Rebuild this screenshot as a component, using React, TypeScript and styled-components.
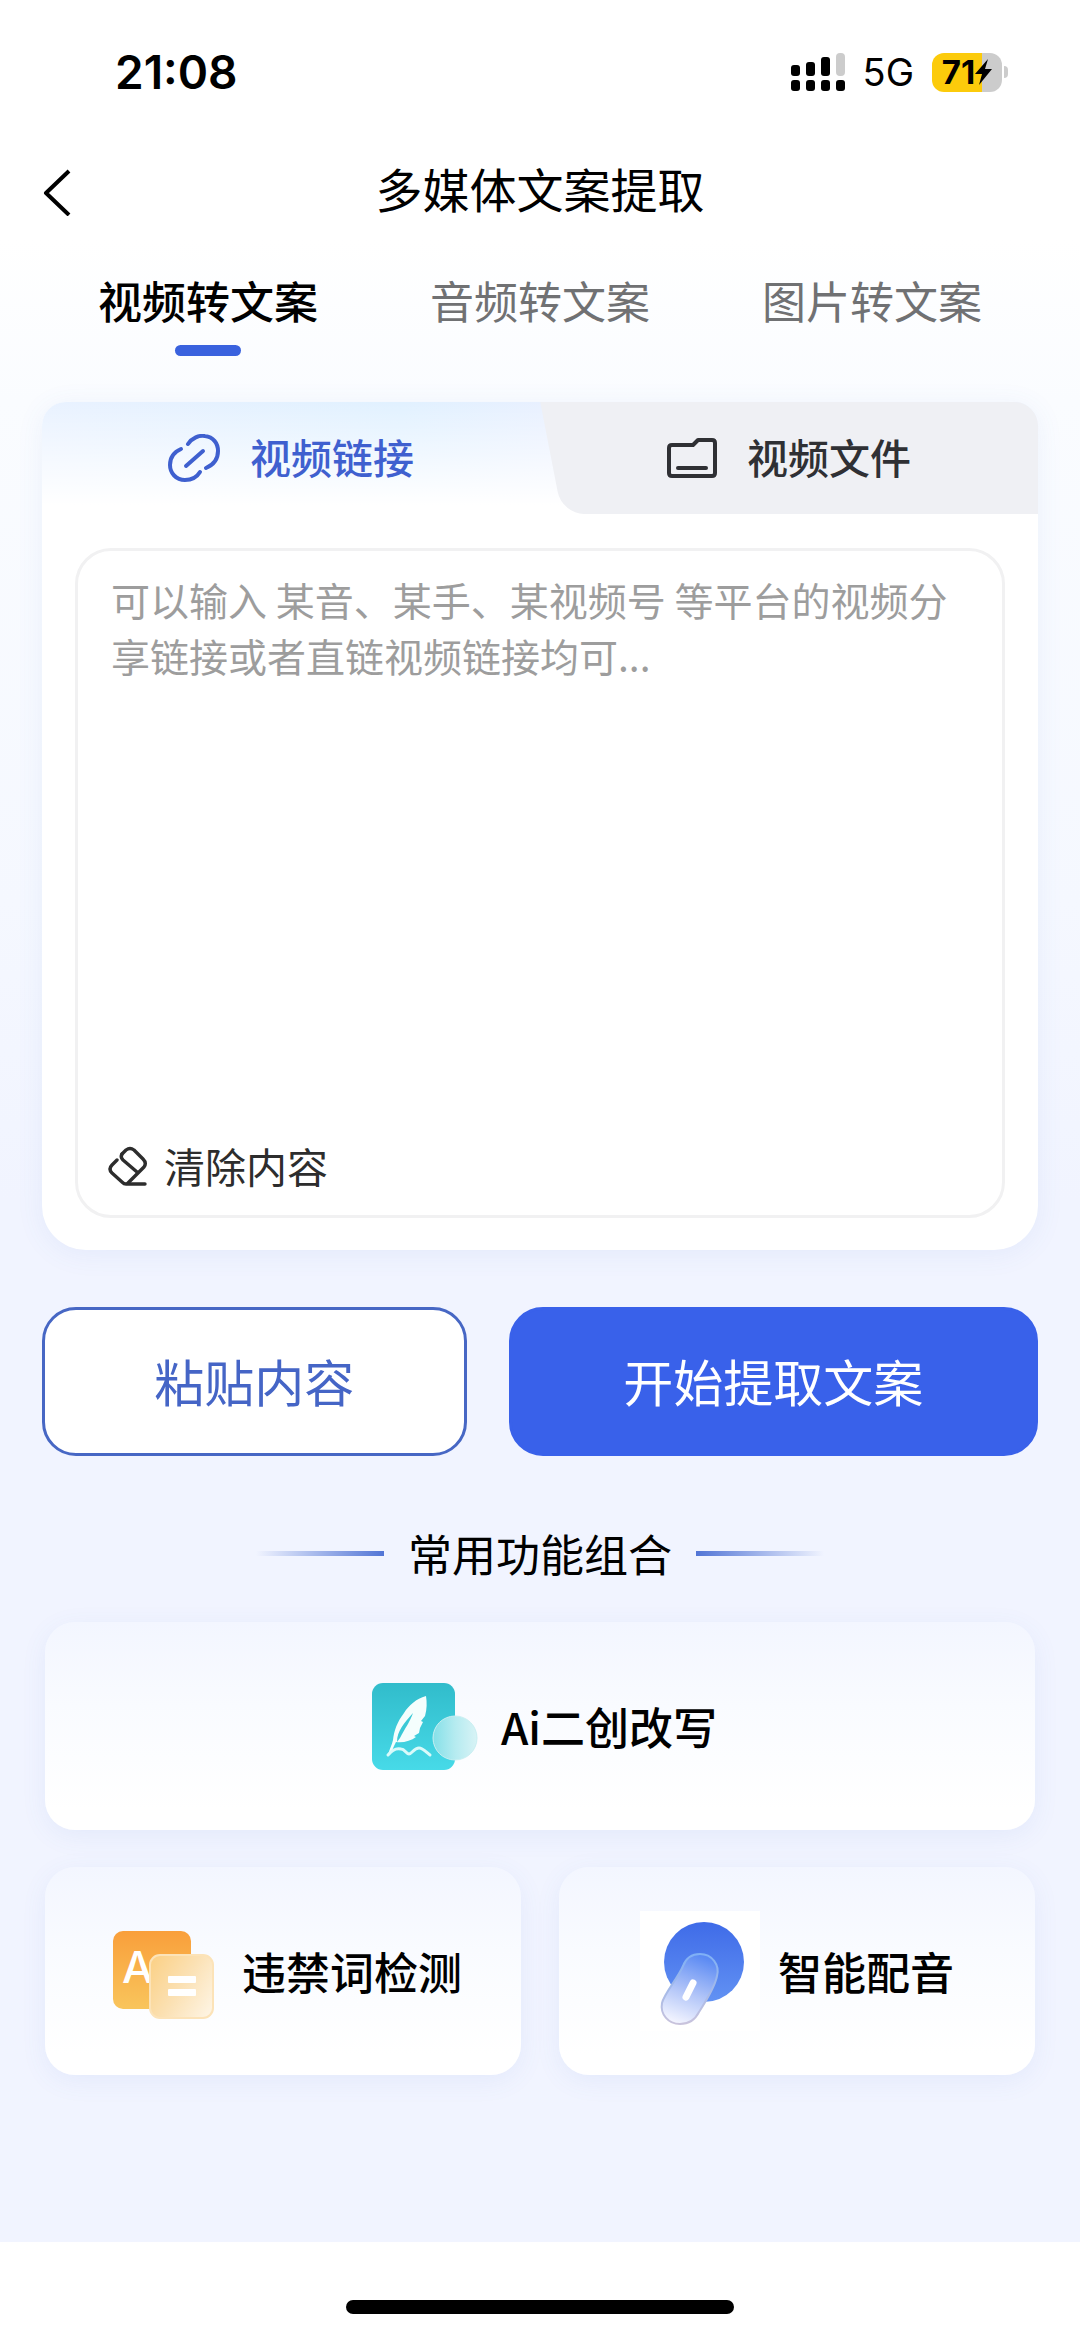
import React from "react";
import styled, { createGlobalStyle } from "styled-components";

const GlobalStyle = createGlobalStyle`
  *, *::before, *::after { box-sizing: border-box; }
  body { margin: 0; background: #ffffff; }
  button, textarea { font-family: inherit; }
  button { border: 0; padding: 0; background: none; color: inherit; cursor: pointer; }
`;

const Page = styled.div`
  min-height: 100vh;
  display: flex;
  flex-direction: column;
  font-family: "Noto Sans CJK SC", sans-serif;
  color: #000000;
  background: linear-gradient(180deg, #ffffff 240px, #fafcff 400px, #f5f8ff 900px, #f1f4ff 1200px);
`;

const StatusBar = styled.div`
  display: flex;
  align-items: center;
  justify-content: space-between;
  height: 144px;
  padding: 0 72px 0 115px;
  font-family: Inter, sans-serif;
`;

const Clock = styled.time`
  font-size: 46px;
  font-weight: 600;
`;

const StatusIcons = styled.div`
  display: flex;
  align-items: center;
  gap: 18px;
`;

const Network = styled.span`
  font-size: 38px;
  line-height: 40px;
`;

const Battery = styled.div`
  display: flex;
  align-items: center;
  gap: 2px;
  &::after {
    content: "";
    width: 4px;
    height: 12px;
    border-radius: 0 6px 6px 0;
    background: #cccccc;
  }
`;

const BatteryBody = styled.div`
  display: flex;
  align-items: center;
  justify-content: center;
  width: 70px;
  height: 39px;
  border-radius: 12px;
  font-size: 33px;
  font-weight: 700;
  background: linear-gradient(90deg, #fccb0b 71%, #cccccc 71%);
`;

const Header = styled.header`
  display: grid;
  grid-template-columns: 80px 1fr 80px;
  align-items: center;
  height: 96px;
  padding: 0 30px;
`;

const BackButton = styled.button`
  display: flex;
  align-items: center;
  height: 80px;
  padding-left: 12px;
`;

const Title = styled.h1`
  margin: 0;
  padding-bottom: 8px;
  text-align: center;
  font-size: 47px;
  line-height: 60px;
  font-weight: 400;
`;

const Main = styled.main`
  flex: 1;
  padding: 0 42px 60px;
`;

const MediaTabs = styled.nav`
  display: grid;
  grid-template-columns: repeat(3, 1fr);
  padding: 30px 0 46px;
`;

const MediaTab = styled.button<{ $active?: boolean }>`
  display: flex;
  flex-direction: column;
  align-items: center;
  gap: 15px;
  font-size: 44px;
  line-height: 60px;
  font-weight: ${(p) => (p.$active ? 500 : 400)};
  color: ${(p) => (p.$active ? "#000000" : "#707173")};
  &::after {
    content: "";
    width: 66px;
    height: 11px;
    border-radius: 6px;
    background: ${(p) => (p.$active ? "#3a62de" : "transparent")};
  }
`;

const Card = styled.section`
  overflow: hidden;
  border-radius: 24px 24px 44px 44px;
  background: #ffffff;
  box-shadow: 0 4px 28px rgba(80, 110, 200, 0.08);
`;

const SourceTabs = styled.div`
  display: grid;
  grid-template-columns: 1fr 1fr;
  height: 112px;
  background:
    linear-gradient(180deg, rgba(255, 255, 255, 0) 0%, #ffffff 92%),
    linear-gradient(90deg, #e9f2ff 0%, #e1f1ff 36%, #eaf0ff 54%);
`;

const SourceTab = styled.button<{ $active?: boolean }>`
  position: relative;
  z-index: 0;
  display: flex;
  align-items: center;
  justify-content: center;
  gap: 30px;
  font-size: 41px;
  line-height: 60px;
  font-weight: 500;
  color: ${(p) => (p.$active ? "#3f60cf" : "#2f3034")};
  &::before {
    content: "";
    display: ${(p) => (p.$active ? "none" : "block")};
    position: absolute;
    z-index: -1;
    inset: 0 -40px 0 22px;
    border-radius: 0 0 0 22px;
    background: #eff0f4;
    transform: skewX(11deg);
    transform-origin: bottom left;
  }
`;

const TabLabel = styled.span`
  padding-bottom: 4px;
`;

const CardBody = styled.div`
  padding: 34px 33px 32px;
`;

const InputBox = styled.div`
  display: flex;
  flex-direction: column;
  padding: 20px 30px;
  border: 3px solid #f1f1f2;
  border-radius: 36px;
`;

const LinkInput = styled.textarea`
  display: block;
  width: 100%;
  height: 564px;
  padding: 0 3px;
  border: 0;
  outline: 0;
  resize: none;
  background: transparent;
  font-size: 39px;
  line-height: 56px;
  color: #222222;
  &::placeholder { color: #9d9d9d; opacity: 1; }
`;

const ClearButton = styled.button`
  display: flex;
  align-items: center;
  align-self: flex-start;
  gap: 16px;
  height: 60px;
  font-size: 41px;
  line-height: 60px;
  color: #2d2d2d;
`;

const Actions = styled.div`
  display: flex;
  gap: 42px;
  margin-top: 57px;
`;

const ActionButton = styled.button<{ $primary?: boolean }>`
  flex: ${(p) => (p.$primary ? 5 : 4)} 1 0;
  height: 149px;
  padding-bottom: 4px;
  border: 3px solid ${(p) => (p.$primary ? "#3961ea" : "#4767c4")};
  border-radius: 34px;
  font-size: 50px;
  line-height: 60px;
  color: ${(p) => (p.$primary ? "#ffffff" : "#4565c6")};
  background: ${(p) => (p.$primary ? "#3961ea" : "#ffffff")};
`;

const SectionTitle = styled.h2`
  display: flex;
  align-items: center;
  justify-content: center;
  gap: 24px;
  margin: 67px 0 39px;
  font-size: 44px;
  line-height: 60px;
  font-weight: 400;
  &::before, &::after {
    content: "";
    width: 128px;
    height: 5px;
    background: linear-gradient(90deg, rgba(82, 117, 214, 0), #5275d6);
  }
  &::after { background: linear-gradient(90deg, #5275d6, rgba(82, 117, 214, 0)); }
`;

const Features = styled.div`
  display: grid;
  grid-template-columns: 1fr 1fr;
  gap: 37px 38px;
  padding: 0 3px;
`;

const FeatureButton = styled.button<{ $wide?: boolean }>`
  grid-column: ${(p) => (p.$wide ? "1 / -1" : "auto")};
  display: flex;
  align-items: center;
  justify-content: center;
  gap: 18px;
  height: 208px;
  border-radius: 30px;
  font-size: 44px;
  line-height: 60px;
  font-weight: 500;
  background: linear-gradient(180deg, #f3f6ff 0%, #f9fbff 40%, #ffffff 90%);
  box-shadow: 0 6px 26px rgba(80, 110, 200, 0.08);
`;

const Footer = styled.footer`
  display: flex;
  justify-content: center;
  padding: 58px 0 23px;
  background: #ffffff;
`;

const HomeIndicator = styled.div`
  width: 36%;
  height: 14px;
  border-radius: 7px;
  background: #000000;
`;

const SignalIcon = () => (
  <svg width="54" height="38" viewBox="0 0 54 38" aria-hidden="true">
    <rect x="0" y="12" width="9" height="11" rx="3" />
    <rect x="15" y="9" width="9" height="14" rx="3" />
    <rect x="30" y="4" width="9" height="19" rx="3" />
    <rect x="45" y="0" width="9" height="23" rx="4" fill="#cccccc" />
    <rect x="0" y="27" width="9" height="11" rx="3" />
    <rect x="15" y="27" width="9" height="11" rx="3" />
    <rect x="30" y="27" width="9" height="11" rx="3" />
    <rect x="45" y="27" width="9" height="11" rx="3" />
  </svg>
);

const BoltIcon = () => (
  <svg width="17" height="26" viewBox="0 0 17 26" aria-hidden="true">
    <path d="M13 0 0 15h7L4 26 17 10h-7Z" />
  </svg>
);

const BackIcon = () => (
  <svg width="32" height="48" viewBox="0 0 32 48" fill="none" stroke="#000" strokeWidth="4" aria-hidden="true">
    <path d="M27 3 4 25l23 22" strokeLinejoin="round" />
  </svg>
);

const LinkIcon = () => (
  <svg width="52" height="48" viewBox="0 0 52 48" fill="none" stroke="#3f60cf" strokeWidth="4" strokeLinecap="round" aria-hidden="true">
    <path d="M20 10C24 4 31 1 37 2 45 3 50 9 50 17 50 25 45 31 38 34" />
    <path d="M13 15C6 18 2 24 2 31 2 39 8 46 17 46 23 46 29 43 32 38" />
    <path d="M18 32 35 17" />
  </svg>
);

const FolderIcon = () => (
  <svg width="50" height="40" viewBox="0 0 50 40" fill="none" stroke="#2f3034" strokeWidth="4" strokeLinecap="round" strokeLinejoin="round" aria-hidden="true">
    <path d="M5 7h21l5-5h14q3 0 3 3v30q0 3-3 3H5q-3 0-3-3V10q0-3 3-3Z" />
    <path d="M11 30h28" />
  </svg>
);

const EraserIcon = () => (
  <svg width="40" height="42" viewBox="0 -2 40 42" fill="none" stroke="#2d2d2d" strokeWidth="3.4" strokeLinecap="round" strokeLinejoin="round" aria-hidden="true">
    <path d="M14 8 18 4q4-3 8 0l9 9q4 4 1 8L20 37" />
    <path d="M14 8q-2 3 1 6l14 12" />
    <path d="M9 14 4 19q-4 4 0 8l10 9q2 2 4 2h19" />
  </svg>
);

const QuillIcon = () => (
  <svg width="120" height="120" viewBox="0 0 120 120" aria-hidden="true">
    <defs>
      <linearGradient id="quillTile" x1="0" y1="0" x2="0" y2="1">
        <stop offset="0" stopColor="#31bccb" />
        <stop offset="1" stopColor="#47dae8" />
      </linearGradient>
      <linearGradient id="quillBubble" x1="0" y1="0" x2="1" y2="0">
        <stop offset="0" stopColor="#85e0e8" />
        <stop offset="0.5" stopColor="#b5ebf0" />
        <stop offset="1" stopColor="#d8f3f6" />
      </linearGradient>
    </defs>
    <rect x="9" y="17" width="83" height="87" rx="11" fill="url(#quillTile)" />
    <path d="M63 30C53 33 46 39 41 47 34 56 31 65 30 74 29 79 26 84 25 89L28 88C29 84 31 80 33 76 40 77 48 75 53 71L51 70 56 67 57 62 60 56 58 55 62 50C64 43 64 36 63 30Z" fill="#f4fefd" />
    <path d="M50 47C47 56 42 62 37 72L34 76C34 65 41 57 50 47Z" fill="#3bc9d6" />
    <path d="M25 89C29 84 34 82 38 83 42 83 43 88 46 88 49 88 51 82 56 82 60 82 63 86 67 89" fill="none" stroke="#d9fafa" strokeWidth="3" strokeLinecap="round" />
    <circle cx="92" cy="72" r="22" fill="url(#quillBubble)" stroke="#c9eff2" strokeWidth="1" />
  </svg>
);

const WordCheckIcon = () => (
  <svg width="120" height="120" viewBox="0 0 120 120" aria-hidden="true">
    <defs>
      <linearGradient id="wordTile" x1="0" y1="0" x2="0" y2="1">
        <stop offset="0" stopColor="#f99f3b" />
        <stop offset="1" stopColor="#f9c55c" />
      </linearGradient>
      <linearGradient id="wordSheet" x1="0" y1="0.2" x2="1" y2="0.8">
        <stop offset="0" stopColor="#fbd28a" />
        <stop offset="0.5" stopColor="#fbe1b4" />
        <stop offset="1" stopColor="#fef3e0" />
      </linearGradient>
    </defs>
    <rect x="9" y="20" width="78" height="78" rx="10" fill="url(#wordTile)" />
    <text x="18" y="72" fontFamily="Inter, sans-serif" fontSize="44" fontWeight="500" fill="#ffffff">A</text>
    <rect x="46" y="44" width="63" height="63" rx="10" fill="url(#wordSheet)" stroke="#fce3b8" strokeWidth="2" />
    <rect x="64" y="65" width="28" height="7" rx="1" fill="#ffffff" />
    <rect x="64" y="78" width="28" height="7" rx="1" fill="#ffffff" />
  </svg>
);

const VoiceIcon = () => (
  <svg width="120" height="120" viewBox="0 0 120 120" aria-hidden="true">
    <defs>
      <linearGradient id="voiceDisc" x1="0" y1="0" x2="0" y2="1">
        <stop offset="0" stopColor="#3f6be8" />
        <stop offset="1" stopColor="#6292f3" />
      </linearGradient>
      <linearGradient id="voiceMic" x1="0.6" y1="0" x2="0.3" y2="1">
        <stop offset="0" stopColor="#5b8af3" />
        <stop offset="0.55" stopColor="#b3c6f8" />
        <stop offset="1" stopColor="#f4f5ff" />
      </linearGradient>
      <linearGradient id="voiceRim" x1="0" y1="0" x2="0" y2="1">
        <stop offset="0" stopColor="#7fb0f6" />
        <stop offset="1" stopColor="#c9c3dc" />
      </linearGradient>
    </defs>
    <rect width="120" height="120" fill="#ffffff" />
    <circle cx="64" cy="51" r="40" fill="url(#voiceDisc)" />
    <path d="M43 55C46 47 52 43 60 43 72 43 80 54 77 65 75 76 66 90 59 101 55 109 48 113 40 113 28 113 20 103 22 92 24 83 38 67 43 55Z" fill="url(#voiceMic)" stroke="url(#voiceRim)" strokeWidth="2" />
    <path d="M53 72 46 86" stroke="#ffffff" strokeWidth="7" strokeLinecap="round" />
  </svg>
);

export default function App() {
  return (
    <Page>
      <GlobalStyle />
      <StatusBar>
        <Clock>21:08</Clock>
        <StatusIcons>
          <SignalIcon />
          <Network>5G</Network>
          <Battery>
            <BatteryBody>
              71
              <BoltIcon />
            </BatteryBody>
          </Battery>
        </StatusIcons>
      </StatusBar>
      <Header>
        <BackButton type="button" aria-label="返回">
          <BackIcon />
        </BackButton>
        <Title>多媒体文案提取</Title>
      </Header>
      <Main>
        <MediaTabs>
          <MediaTab type="button" $active>视频转文案</MediaTab>
          <MediaTab type="button">音频转文案</MediaTab>
          <MediaTab type="button">图片转文案</MediaTab>
        </MediaTabs>
        <Card>
          <SourceTabs>
            <SourceTab type="button" $active>
              <LinkIcon />
              <TabLabel>视频链接</TabLabel>
            </SourceTab>
            <SourceTab type="button">
              <FolderIcon />
              <TabLabel>视频文件</TabLabel>
            </SourceTab>
          </SourceTabs>
          <CardBody>
            <InputBox>
              <LinkInput
                aria-label="视频链接"
                placeholder="可以输入 某音、某手、某视频号 等平台的视频分享链接或者直链视频链接均可..."
              />
              <ClearButton type="button">
                <EraserIcon />
                清除内容
              </ClearButton>
            </InputBox>
          </CardBody>
        </Card>
        <Actions>
          <ActionButton type="button">粘贴内容</ActionButton>
          <ActionButton type="button" $primary>开始提取文案</ActionButton>
        </Actions>
        <SectionTitle>常用功能组合</SectionTitle>
        <Features>
          <FeatureButton type="button" $wide>
            <QuillIcon />
            Ai二创改写
          </FeatureButton>
          <FeatureButton type="button">
            <WordCheckIcon />
            违禁词检测
          </FeatureButton>
          <FeatureButton type="button">
            <VoiceIcon />
            智能配音
          </FeatureButton>
        </Features>
      </Main>
      <Footer>
        <HomeIndicator />
      </Footer>
    </Page>
  );
}
